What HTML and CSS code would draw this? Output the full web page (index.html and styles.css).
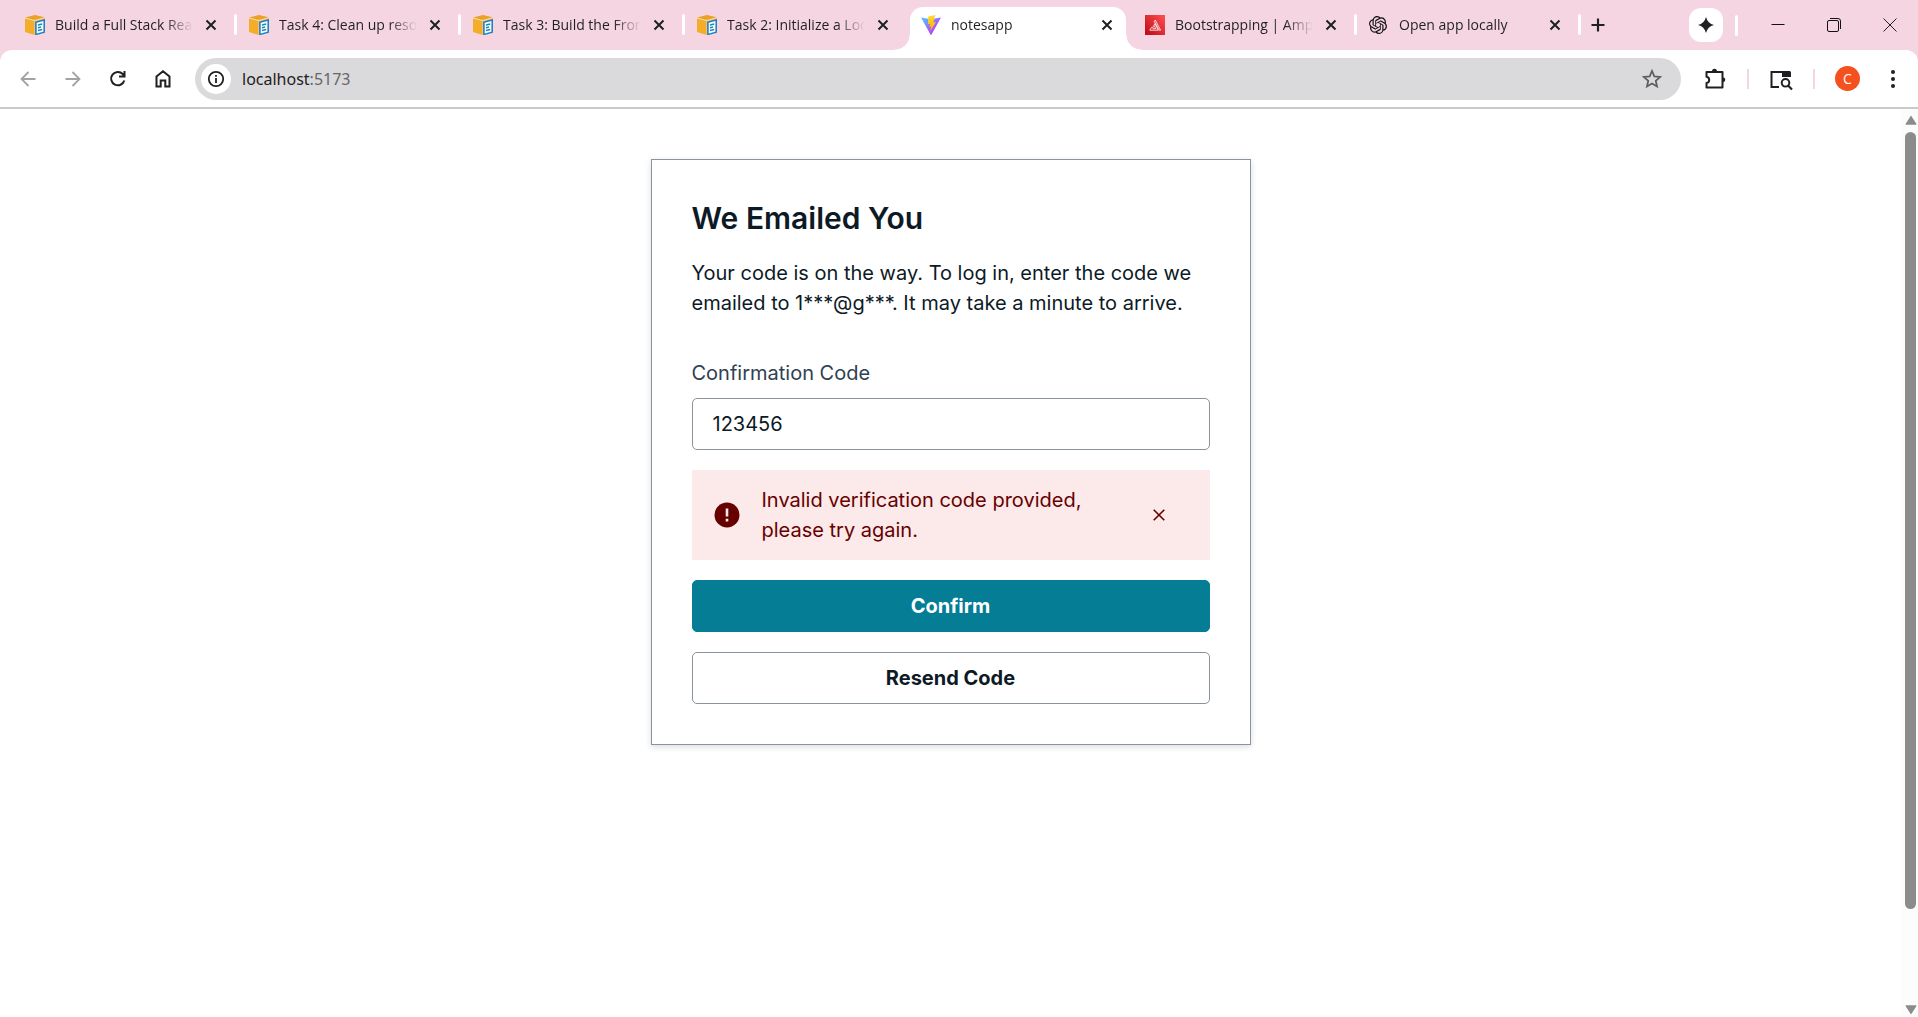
FILE: index.html
```html
<!DOCTYPE html>
<html lang="en">
<head>
<meta charset="utf-8">
<meta name="viewport" content="width=device-width, initial-scale=1">
<title>notesapp</title>
<link rel="stylesheet" href="styles.css">
</head>
<body>
<svg class="symbols" aria-hidden="true">
  <defs>
    <linearGradient id="vite-blue" x1="0" y1="0" x2="1" y2="1">
      <stop offset="0" stop-color="#41d1ff"/><stop offset=".6" stop-color="#a855ff"/><stop offset="1" stop-color="#bd34fe"/>
    </linearGradient>
    <linearGradient id="vite-bolt" x1="0" y1="0" x2="0" y2="1">
      <stop offset="0" stop-color="#ffdd35"/><stop offset="1" stop-color="#ffa800"/>
    </linearGradient>
    <linearGradient id="amp-red" x1="0" y1="1" x2="1" y2="0">
      <stop offset="0" stop-color="#bd0816"/><stop offset="1" stop-color="#ff5252"/>
    </linearGradient>
  </defs>
  <symbol id="i-lab" viewBox="0 0 20 20">
    <path d="M0 3.400 9.600 5.900V20L0 17z" fill="#f3ad27"/>
    <path d="M0 2.400 10 0l9.600 2.200L9.600 5z" fill="#eaa31d"/>
    <path d="M10.200 5.900 20 3.200v14l-9.800 2.800z" fill="#f3ad27"/>
    <path d="M10.900 7.200 19.200 5v12.200l-8.300 2.200z" fill="#fff" stroke="#1c86c4" stroke-width="1.600"/>
    <path d="m13 10 4.200-1.100M13 12.800l3-.8M13 15.600l4.200-1.100" stroke="#1c86c4" stroke-width="1.500"/>
  </symbol>
  <symbol id="i-close" viewBox="0 0 12 12"><path d="m1.500 1.500 9 9m0-9-9 9" fill="none" stroke="#1f2023" stroke-width="2"/></symbol>
  <symbol id="i-openai" viewBox="0 0 24 24"><path fill="#111" d="M22.282 9.821a5.985 5.985 0 0 0-.516-4.910 6.046 6.046 0 0 0-6.510-2.900A6.065 6.065 0 0 0 4.981 4.182a5.985 5.985 0 0 0-3.998 2.900 6.046 6.046 0 0 0 .743 7.097 5.980 5.980 0 0 0 .511 4.911 6.051 6.051 0 0 0 6.515 2.900A5.985 5.985 0 0 0 13.260 24a6.056 6.056 0 0 0 5.772-4.206 5.990 5.990 0 0 0 3.997-2.900 6.056 6.056 0 0 0-.747-7.073zM13.260 22.430a4.476 4.476 0 0 1-2.876-1.040l.141-.081 4.779-2.758a.795.795 0 0 0 .392-.681v-6.737l2.020 1.169a.071.071 0 0 1 .038.052v5.583a4.504 4.504 0 0 1-4.494 4.494zM3.600 18.304a4.471 4.471 0 0 1-.535-3.014l.142.085 4.783 2.759a.771.771 0 0 0 .780 0l5.843-3.369v2.332a.080.080 0 0 1-.033.062L9.740 19.950a4.500 4.500 0 0 1-6.140-1.646zM2.340 7.896a4.485 4.485 0 0 1 2.366-1.973V11.600a.766.766 0 0 0 .388.676l5.815 3.355-2.020 1.168a.076.076 0 0 1-.071 0l-4.830-2.786A4.504 4.504 0 0 1 2.340 7.872zm16.597 3.855-5.833-3.387L15.119 7.200a.076.076 0 0 1 .071 0l4.830 2.791a4.494 4.494 0 0 1-.676 8.105v-5.678a.790.790 0 0 0-.407-.667zm2.010-3.023-.141-.085-4.774-2.782a.776.776 0 0 0-.785 0L9.409 9.230V6.897a.066.066 0 0 1 .028-.061l4.830-2.787a4.499 4.499 0 0 1 6.680 4.660zm-12.640 4.135-2.020-1.164a.080.080 0 0 1-.038-.057V6.075a4.499 4.499 0 0 1 7.375-3.453l-.142.080-4.778 2.758a.795.795 0 0 0-.393.682zm1.097-2.365 2.602-1.500 2.607 1.500v2.999l-2.597 1.500-2.607-1.500z"/></symbol>
</svg>

<header class="browser">
  <nav class="tabstrip" aria-label="Tabs">
    <div class="tab"><svg class="favicon"><use href="#i-lab"/></svg><span class="tab-title">Build a Full Stack Rea</span><button class="tab-close" aria-label="Close tab"><svg><use href="#i-close"/></svg></button></div>
    <div class="tab"><svg class="favicon"><use href="#i-lab"/></svg><span class="tab-title">Task 4: Clean up reso</span><button class="tab-close" aria-label="Close tab"><svg><use href="#i-close"/></svg></button></div>
    <div class="tab"><svg class="favicon"><use href="#i-lab"/></svg><span class="tab-title">Task 3: Build the Fron</span><button class="tab-close" aria-label="Close tab"><svg><use href="#i-close"/></svg></button></div>
    <div class="tab no-divider"><svg class="favicon"><use href="#i-lab"/></svg><span class="tab-title">Task 2: Initialize a Loc</span><button class="tab-close" aria-label="Close tab"><svg><use href="#i-close"/></svg></button></div>
    <div class="tab active"><svg class="favicon" viewBox="0 0 20 20"><path d="M0 2.500 10 4.300l10-1.800L10.400 19.800q-.400.600-.8 0z" fill="url(#vite-blue)"/><path d="M14.500 0 7.300 1.400l-.5 7.800 2.400-.5-.7 3.200 1.600-.4-.8 4.800L15 7l-2.700.5 2.200-7.500z" fill="url(#vite-bolt)"/></svg><span class="tab-title">notesapp</span><button class="tab-close" aria-label="Close tab"><svg><use href="#i-close"/></svg></button></div>
    <div class="tab"><svg class="favicon" viewBox="0 0 20 20"><path d="M0 0h20v20H0z" fill="url(#amp-red)"/><path d="M8.200 11.800 10 8.600l3.200 6.600H4.800l1.700-2.900h1.900M9 6.900 10.300 5l5.300 10.200h-1.400L9.400 6.700M7.500 13.700h3.300L9.300 10.800" fill="none" stroke="#fff" stroke-width=".8"/></svg><span class="tab-title">Bootstrapping | Amp</span><button class="tab-close" aria-label="Close tab"><svg><use href="#i-close"/></svg></button></div>
    <div class="tab"><svg class="favicon" viewBox="0 0 20 20"><use href="#i-openai" x="0" y="1" width="18" height="18"/></svg><span class="tab-title">Open app locally</span><button class="tab-close" aria-label="Close tab"><svg><use href="#i-close"/></svg></button></div>
    <button class="new-tab" aria-label="New tab"><svg viewBox="0 0 14 14"><path d="M7 .5v13M.5 7h13" stroke="#1f2023" stroke-width="2.200"/></svg></button>
    <div class="window-tools">
      <button class="spark" aria-label="Gemini"><svg viewBox="0 0 16 16"><path d="M8 0q1.600 6.400 8 8-6.400 1.600-8 8-1.600-6.400-8-8 6.400-1.600 8-8z" fill="#1f2023"/></svg></button>
      <span class="strip-divider"></span>
      <button class="win" aria-label="Minimize"><svg viewBox="0 0 14 14"><path d="M.5 6.500h13" stroke="#111"/></svg></button>
      <button class="win" aria-label="Restore"><svg viewBox="0 0 14 14" fill="none" stroke="#111"><rect x=".5" y="2.500" width="11" height="11" rx="1.500"/><path d="M3 .5h8q2.500 0 2.500 2.500v8"/></svg></button>
      <button class="win" aria-label="Close window"><svg viewBox="0 0 14 14"><path d="m.5.5 13 13m0-13-13 13" stroke="#222"/></svg></button>
    </div>
  </nav>

  <div class="toolbar">
    <button class="nav-button" aria-label="Back" disabled><svg viewBox="0 0 20 20"><path d="M17.500 10H3.500m7-7-7 7 7 7" fill="none" stroke="#a3a3a4" stroke-width="1.800"/></svg></button>
    <button class="nav-button" aria-label="Forward" disabled><svg viewBox="0 0 20 20"><path d="M2.500 10h14m-7-7 7 7-7 7" fill="none" stroke="#a3a3a4" stroke-width="1.800"/></svg></button>
    <button class="nav-button" aria-label="Reload"><svg viewBox="0 0 20 20"><path d="M16.300 11.500A6.700 6.700 0 1 1 14.700 5L16.500 7M16.500 2v5.500h-5.500" fill="none" stroke="#1f2023" stroke-width="2"/></svg></button>
    <button class="nav-button" aria-label="Home"><svg viewBox="0 0 20 20"><path d="M3.500 17.500V7.500L10 2.300l6.500 5.200v10h-4.200V11.500H7.700v6z" fill="none" stroke="#1f2023" stroke-width="2"/></svg></button>
    <div class="omnibox">
      <button class="site-info" aria-label="Site information"><svg viewBox="0 0 18 18"><circle cx="9" cy="9" r="7.200" fill="none" stroke="#1f2023" stroke-width="1.800"/><path d="M9 8v5M9 5v1.800" stroke="#1f2023" stroke-width="1.800"/></svg></button>
      <a class="address" href="#">localhost<span>:5173</span></a>
      <button class="bookmark" aria-label="Bookmark this tab"><svg viewBox="0 0 20 20"><path d="m10 2.700 2.100 4.900 5.300.5-4 3.500 1.200 5.200L10 14.100l-4.600 2.700 1.200-5.200-4-3.500 5.300-.5z" fill="none" stroke="#5e5f62" stroke-width="1.600"/></svg></button>
    </div>
    <div class="toolbar-tools">
      <button class="tool" aria-label="Extensions"><svg viewBox="0 0 24 24"><path d="M3.500 5h16v15.500h-16V16q2.700-.5 2.700-3.100T3.500 9.800z" fill="none" stroke="#1f2023" stroke-width="2" stroke-linejoin="round"/><path d="M9 4.500a2.500 2.700 0 0 1 5 0zM20 10.500a2.300 2.300 0 0 1 0 4.600z" fill="#1f2023"/></svg></button>
      <span class="tool-divider"></span>
      <button class="tool" aria-label="Search side panel"><svg viewBox="0 0 24 24"><path d="M10 20H2.500V5H21" fill="none" stroke="#1f2023" stroke-width="2"/><path d="M13 4h7.500A1.500 1.500 0 0 1 22 5.500V10h-9z" fill="#1f2023"/><circle cx="16.500" cy="15.800" r="3.800" fill="#fff" stroke="#1f2023" stroke-width="2"/><path d="m19 18.500 4 4" stroke="#1f2023" stroke-width="2.200"/></svg></button>
      <span class="tool-divider"></span>
      <button class="avatar" aria-label="Profile">C</button>
      <button class="menu" aria-label="Menu"><svg viewBox="0 0 6 20"><circle cx="3" cy="3" r="2"/><circle cx="3" cy="10" r="2"/><circle cx="3" cy="17" r="2"/></svg></button>
    </div>
  </div>
</header>

<div class="viewport">
  <main class="page">
    <form class="card">
      <h1>We Emailed You</h1>
      <p class="lead">Your code is on the way. To log in, enter the code we emailed to 1***@g***. It may take a minute to arrive.</p>
      <label for="code">Confirmation Code</label>
      <input id="code" type="text" value="123456">
      <div class="alert" role="alert">
        <svg class="alert-icon" viewBox="0 0 26 26"><circle cx="13" cy="13" r="12.500" fill="#600"/><path d="M13 6.500v8M13 16.800v2.600" stroke="#fce9e9" stroke-width="2.600"/></svg>
        <p>Invalid verification code provided, please try again.</p>
        <button class="dismiss" type="button" aria-label="Dismiss alert"><svg viewBox="0 0 12 12"><path d="m.7.7 10.600 10.600m0-10.600L.7 11.300" stroke="#600" stroke-width="1.600"/></svg></button>
      </div>
      <button class="button primary" type="submit">Confirm</button>
      <button class="button" type="button">Resend Code</button>
    </form>
  </main>
  <div class="scrollbar" aria-hidden="true">
    <svg viewBox="0 0 12 10"><path d="M6 .5 11.500 9q0 .8-.8.8H1.300Q.5 9.800.5 9z" fill="#8b8b8b"/></svg>
    <div class="track"><div class="thumb"></div></div>
    <svg viewBox="0 0 12 10"><path d="M6 9.500.5 1q0-.8.8-.8h9.400q.8 0 .8.8z" fill="#8b8b8b"/></svg>
  </div>
</div>
</body>
</html>
```
FILE: styles.css
```css
*,
*::before,
*::after {
  box-sizing: border-box;
}

body {
  margin: 0;
  min-height: 100vh;
  display: flex;
  flex-direction: column;
  background: #fff;
  color: #0d1a26;
  font-family: Inter, "Liberation Sans", sans-serif;
}

button {
  margin: 0;
  padding: 0;
  border: 0;
  background: none;
  font: inherit;
  color: inherit;
}

svg {
  display: block;
  flex: none;
}

.symbols {
  position: absolute;
  width: 0;
  height: 0;
}

/* Browser chrome */

.browser {
  background: #f6d5e3;
  border-bottom: 2px solid #cacaca;
  font-family: "Open Sans", "Noto Sans", sans-serif;
}

.tabstrip {
  display: flex;
  align-items: center;
  height: 50px;
  padding-left: 14px;
}

.tab {
  position: relative;
  flex: 0 1 224px;
  min-width: 0;
  height: 50px;
  display: flex;
  align-items: center;
  padding: 0 21px 0 11px;
}

.tab:not(.active):not(.no-divider)::after {
  content: "";
  position: absolute;
  right: 1px;
  top: 14px;
  width: 3px;
  height: 21px;
  border-radius: 2px;
  background: #fff;
}

.favicon {
  width: 20px;
  height: 20px;
  margin-right: 10px;
}

.tab-title {
  flex: 1;
  min-width: 0;
  overflow: hidden;
  white-space: nowrap;
  font-size: 14px;
  line-height: 20px;
  color: #1f2023;
  -webkit-mask-image: linear-gradient(to right, #000 calc(100% - 28px), transparent);
  mask-image: linear-gradient(to right, #000 calc(100% - 28px), transparent);
}

.tab-close {
  margin-left: 12px;
}

.tab-close svg {
  width: 12px;
  height: 12px;
}

.tab.active::before {
  content: "";
  position: absolute;
  z-index: 0;
  left: 0;
  right: 8px;
  top: 7px;
  bottom: 0;
  border-radius: 13px 13px 0 0;
  background: #fff;
}

.tab.active::after {
  content: "";
  position: absolute;
  left: -15px;
  right: -7px;
  bottom: 0;
  height: 15px;
  background:
    radial-gradient(circle at 0 0, transparent 14px, #fff 15px) left / 15px 15px no-repeat,
    radial-gradient(circle at 100% 0, transparent 14px, #fff 15px) right / 15px 15px no-repeat;
}

.tab.active > * {
  position: relative;
  z-index: 1;
}

.new-tab {
  width: 32px;
  height: 32px;
  display: grid;
  place-items: center;
}

.new-tab svg {
  width: 14px;
  height: 14px;
}

.window-tools {
  margin-left: auto;
  display: flex;
  align-items: center;
}

.spark {
  width: 34px;
  height: 34px;
  border-radius: 12px;
  background: #fff;
  display: grid;
  place-items: center;
}

.spark svg {
  width: 16px;
  height: 16px;
}

.strip-divider {
  width: 3px;
  height: 21px;
  margin: 0 12px;
  border-radius: 2px;
  background: #fff;
}

.win {
  width: 56px;
  height: 50px;
  display: grid;
  place-items: center;
}

.win svg {
  width: 14px;
  height: 14px;
}

.toolbar {
  display: flex;
  align-items: center;
  height: 57px;
  padding: 0 22px 0 5px;
  border-radius: 12px 12px 0 0;
  background: #fff;
}

.nav-button {
  width: 45px;
  height: 42px;
  display: grid;
  place-items: center;
}

.nav-button svg {
  width: 20px;
  height: 20px;
}

.omnibox {
  flex: 1;
  min-width: 0;
  height: 42px;
  margin-left: 10px;
  padding: 0 18px 0 6px;
  border-radius: 21px;
  background: #dadadc;
  display: flex;
  align-items: center;
}

.site-info {
  width: 30px;
  height: 30px;
  border-radius: 50%;
  background: #fff;
  display: grid;
  place-items: center;
}

.site-info svg {
  width: 18px;
  height: 18px;
}

.address {
  flex: 1;
  margin-left: 11px;
  font-family: "Noto Sans", "Open Sans", sans-serif;
  font-size: 16px;
  line-height: 24px;
  color: #1f2023;
  text-decoration: none;
}

.address span {
  color: #66676a;
}

.bookmark svg {
  width: 22px;
  height: 22px;
}

.toolbar-tools {
  display: flex;
  align-items: center;
  margin-left: 22px;
}

.tool svg {
  width: 24px;
  height: 24px;
}

.tool-divider {
  width: 2px;
  height: 20px;
  margin: 0 20px;
  background: #f6d5e3;
}

.avatar {
  width: 25px;
  height: 25px;
  border-radius: 50%;
  background: #f4511e;
  color: #fff;
  font-size: 14px;
  line-height: 25px;
  text-align: center;
}

.menu {
  margin-left: 30px;
}

.menu svg {
  width: 6px;
  height: 20px;
  fill: #1f2023;
}

/* Page */

.viewport {
  flex: 1;
  display: flex;
}

.page {
  flex: 1;
  min-width: 0;
  padding: 50px 20px;
}

.card {
  width: 100%;
  max-width: 600px;
  margin: 0 auto;
  padding: 40px;
  border: 1px solid #89949f;
  box-shadow: 0 2px 6px rgba(13, 26, 38, .15);
  display: flex;
  flex-direction: column;
  font-size: 20px;
  line-height: 30px;
}

.card h1 {
  margin: 0 0 22px;
  font-size: 30px;
  line-height: 36px;
  font-weight: 600;
}

.lead {
  margin: 0 0 40px;
}

.card label {
  margin-bottom: 10px;
  color: #304050;
}

.card input {
  width: 100%;
  height: 52px;
  padding: 0 20px;
  border: 1px solid #89949f;
  border-radius: 5px;
  background: #fff;
  color: #0d1a26;
  font: inherit;
}

.alert {
  margin: 20px 0;
  padding: 15px 20px;
  background: #fce9e9;
  color: #600;
  display: flex;
  align-items: center;
}

.alert p {
  flex: 1;
  margin: 0 20px;
}

.alert-icon {
  width: 30px;
  height: 26px;
}

.dismiss {
  width: 62px;
  height: 52px;
  display: grid;
  place-items: center;
}

.dismiss svg {
  width: 12px;
  height: 12px;
}

.button {
  height: 52px;
  border: 1px solid #89949f;
  border-radius: 5px;
  font-weight: 700;
  text-align: center;
}

.button.primary {
  margin-bottom: 20px;
  border-color: #047d95;
  background: #047d95;
  color: #fff;
}

/* Scrollbar */

.scrollbar {
  width: 17px;
  padding: 6px 0 2px 2px;
  background: #fcfcfc;
  display: flex;
  flex-direction: column;
  align-items: center;
}

.scrollbar svg {
  width: 12px;
  height: 10px;
}

.track {
  flex: 1;
  width: 11px;
  padding-top: 7px;
}

.thumb {
  height: 89%;
  border-radius: 6px;
  background: #8b8b8b;
}
```
